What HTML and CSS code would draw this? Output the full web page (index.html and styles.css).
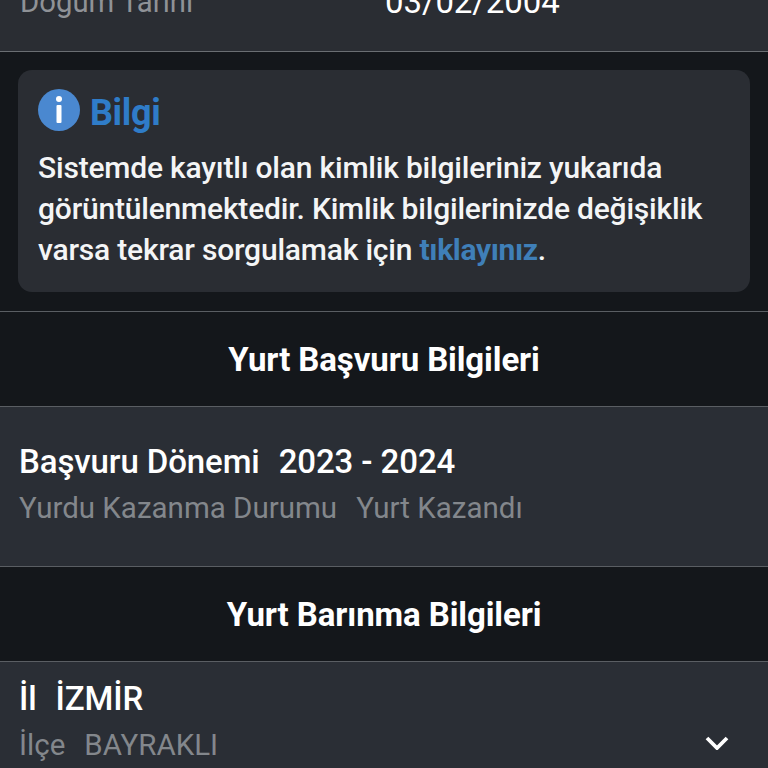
FILE: index.html
```html
<!DOCTYPE html>
<html lang="tr">
<head>
<meta charset="utf-8">
<title>Yurt Başvuru</title>
<link rel="stylesheet" href="styles.css">
</head>
<body>
<div class="screen">
  <section class="id-row">
    <span class="id-label">Doğum Tarihi</span>
    <span class="id-value">03/02/2004</span>
  </section>
  <section class="info-wrap">
    <div class="info-card">
      <div class="info-head">
        <svg class="info-icon" viewBox="0 0 42 42" aria-hidden="true">
          <circle cx="21" cy="21" r="21" fill="#4a88d0"/>
          <circle cx="21" cy="10" r="3" fill="#fff"/>
          <rect x="18.5" y="16" width="5" height="18" rx="1" fill="#fff"/>
        </svg>
        <span class="info-title">Bilgi</span>
      </div>
      <p class="info-text">Sistemde kayıtlı olan kimlik bilgileriniz yukarıda görüntülenmektedir. Kimlik bilgilerinizde değişiklik varsa tekrar sorgulamak için <a class="info-link">tıklayınız</a>.</p>
    </div>
  </section>
  <h2 class="band band-first">Yurt Başvuru Bilgileri</h2>
  <section class="entry entry-term">
    <div class="line-main"><span>Başvuru Dönemi</span><span>2023 - 2024</span></div>
    <div class="line-sub"><span>Yurdu Kazanma Durumu</span><span>Yurt Kazandı</span></div>
  </section>
  <h2 class="band band-second">Yurt Barınma Bilgileri</h2>
  <section class="entry entry-city">
    <div class="city-text">
      <div class="line-main"><span>İl</span><span>İZMİR</span></div>
      <div class="line-sub"><span>İlçe</span><span>BAYRAKLI</span></div>
    </div>
    <svg class="chevron" viewBox="0 0 24 14" aria-hidden="true"><path d="M2 2l10 10L22 2" fill="none" stroke="#fff" stroke-width="3.8"/></svg>
  </section>
</div>
</body>
</html>
```
FILE: styles.css
```css
html, body { margin: 0; padding: 0; background: #2a2e35; }
.screen { width: 768px; height: 768px; overflow: hidden; font-family: Roboto, "Noto Sans", sans-serif; color: #fff; background: #2a2e35; }
.id-row { height: 52px; box-sizing: border-box; border-bottom: 1px solid #6a6e72; background: #2a2d33; display: flex; align-items: flex-end; padding-bottom: 30px; line-height: 38px; }
.id-label { width: 385px; padding-left: 20px; box-sizing: border-box; color: #8f9297; font-size: 29.3px; }
.id-value { color: #fff; font-size: 33px; letter-spacing: -.1px; }
.info-wrap { height: 259px; box-sizing: border-box; padding: 18px 18px 0; background: #14171b; }
.info-card { height: 222px; box-sizing: border-box; background: #2a2d33; border-radius: 14px; padding: 19px 20px 0; }
.info-head { display: flex; align-items: center; gap: 10px; height: 42px; }
.info-icon { width: 42px; height: 42px; flex: none; }
.info-title { color: #2f7cc8; font-size: 36px; font-weight: 700; line-height: 42px; margin-top: 5px; letter-spacing: -.35px; }
.info-text { margin: 16px 0 0; font-size: 30px; line-height: 41px; color: #f4f5f6; font-weight: 500; letter-spacing: -.2px; }
.info-link { color: #3f7fb8; font-weight: 700; letter-spacing: -.35px; }
.band { margin: 0; height: 96px; box-sizing: border-box; display: flex; align-items: center; justify-content: center; background: #14171b; border-top: 1px solid #5a5e63; border-bottom: 1px solid #5a5e63; font-size: 33px; font-weight: 700; letter-spacing: -.1px; }
.entry { background: #2a2e35; box-sizing: border-box; }
.entry-term { height: 159px; padding: 33px 19px 0; }
.entry-city { padding: 15px 19px 0; display: flex; justify-content: space-between; }
.line-main { display: flex; gap: 19px; font-size: 33px; line-height: 44px; font-weight: 500; letter-spacing: -.1px; }
.line-sub { display: flex; gap: 19px; margin-top: 4px; font-size: 29.5px; line-height: 40px; color: #83878c; }
.chevron { width: 24px; height: 14px; margin: 59px 20px 0 0; flex: none; }
```
